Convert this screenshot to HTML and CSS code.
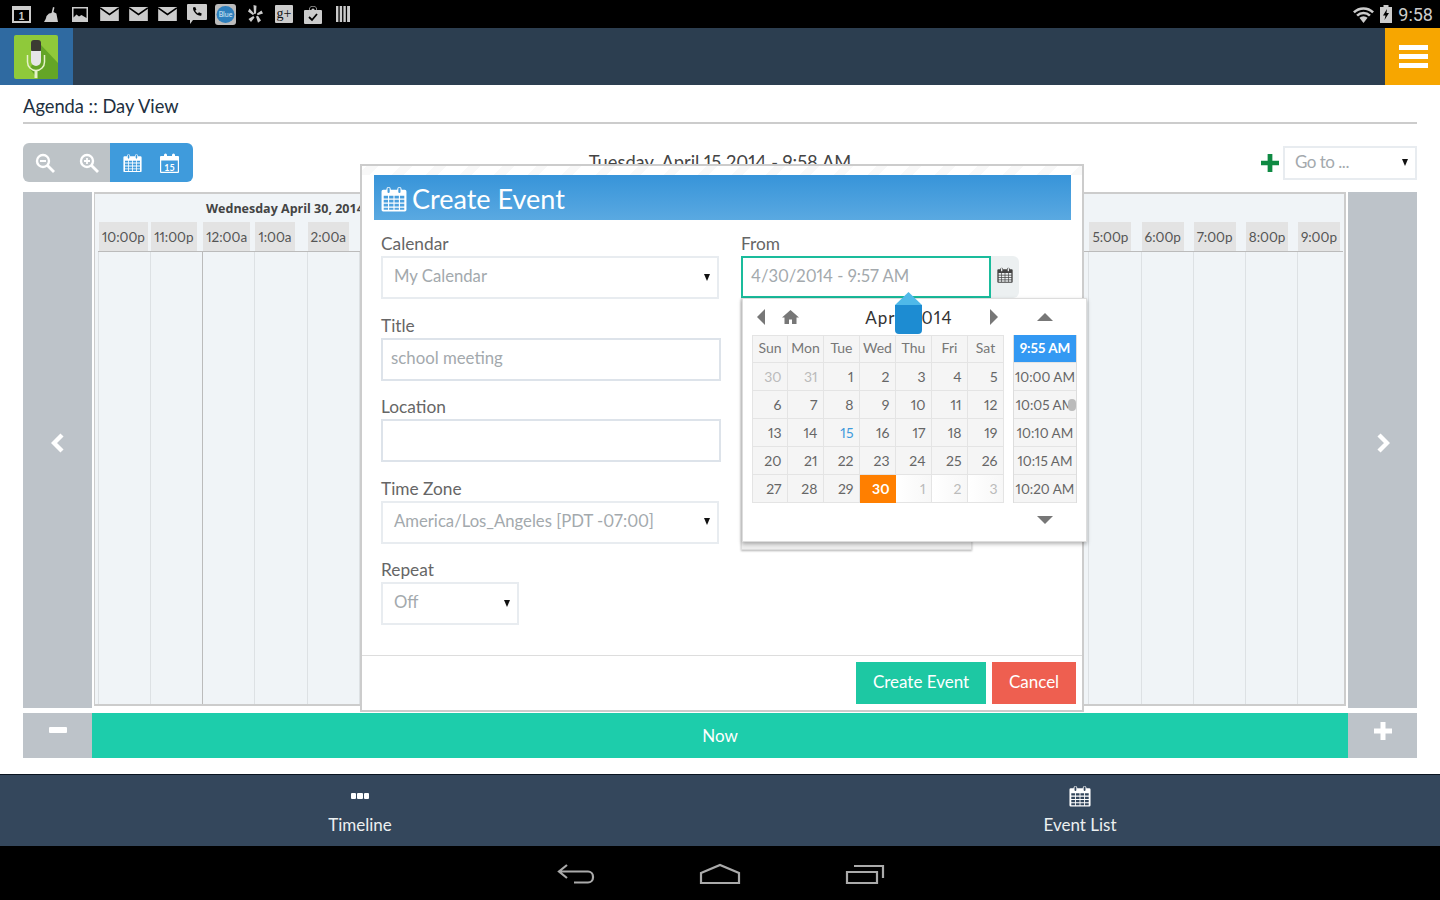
FILE: index.html
```html
<!DOCTYPE html>
<html lang="en">
<head>
<meta charset="utf-8">
<title>Agenda :: Day View</title>
<link rel="stylesheet" href="styles.css">
</head>
<body>
<svg class="defs" width="0" height="0">
  <symbol id="cal" viewBox="0 0 24 24">
    <path fill-rule="evenodd" d="M5 3.5V3a2 2 0 0 1 4 0v.5h6V3a2 2 0 0 1 4 0v.5h3a1.5 1.5 0 0 1 1.500 1.500v17a1.500 1.500 0 0 1-1.500 1.500H2A1.500 1.500 0 0 1 .5 22V5A1.500 1.500 0 0 1 2 3.500zM6 2.500v3a1 1 0 0 0 2 0v-3a1 1 0 0 0-2 0zM16 2.500v3a1 1 0 0 0 2 0v-3a1 1 0 0 0-2 0zM2.500 9h4v2.500h-4zM7.500 9h4v2.500h-4zM12.500 9h4v2.500h-4zM17.500 9h4v2.500h-4zM2.500 12.700h4v2.500h-4zM7.500 12.700h4v2.500h-4zM12.500 12.700h4v2.500h-4zM17.500 12.700h4v2.500h-4zM2.500 16.400h4v2.500h-4zM7.500 16.400h4v2.500h-4zM12.500 16.400h4v2.500h-4zM17.500 16.400h4v2.500h-4zM2.500 20h4v2h-4zM7.500 20h4v2h-4zM12.500 20h4v2h-4zM17.500 20h4v2h-4z"/>
  </symbol>
  <symbol id="mail" viewBox="0 0 20 15">
    <path d="M0 0h20v15H0z"/>
    <path d="M0 1l10 7 10-7" fill="none" stroke="#000" stroke-width="1.600"/>
  </symbol>
</svg>

<div class="status-bar">
  <div class="status-icons">
    <span class="slot"><svg class="st" width="19" height="17" viewBox="0 0 19 17"><path fill-rule="evenodd" d="M0 0h19v17H0zM2 4v11h15V4z"/><text x="9.500" y="14" class="st-num">1</text></svg></span>
    <span class="slot"><svg class="st" width="14" height="15" viewBox="0 0 14 15"><path d="M9 0l1.500.6L9.400 5l3 1.500L14 15H0c1-2 2-3 2.500-6L5 6.500l2.500-.5z"/></svg></span>
    <span class="slot"><svg class="st" width="16" height="15" viewBox="0 0 16 15"><path fill-rule="evenodd" d="M0 0h16v15H0zM1.500 1.500v9l3-3 2.500 2 2.500-1.500 5 3v-9.500z"/></svg></span>
    <span class="slot"><svg class="st" width="19" height="14"><use href="#mail"/></svg></span>
    <span class="slot"><svg class="st" width="19" height="14"><use href="#mail"/></svg></span>
    <span class="slot"><svg class="st" width="19" height="14"><use href="#mail"/></svg></span>
    <span class="slot"><svg class="st" width="20" height="20" viewBox="0 0 20 20"><path d="M1 0h18a1 1 0 0 1 1 1v14a1 1 0 0 1-1 1H6l-3 4v-4H1a1 1 0 0 1-1-1V1a1 1 0 0 1 1-1z"/><path d="M6 3.500l2.200-.5 1.200 2.800-1.300 1a7 7 0 0 0 2.800 2.800l1-1.300 2.800 1.200-.5 2.200c-4 .5-8.500-4-8.200-8.200z" fill="#000"/></svg></span>
    <span class="slot"><svg class="st" width="21" height="21" viewBox="0 0 21 21"><rect width="21" height="21" rx="3" fill="#bbb"/><ellipse cx="10.500" cy="10.500" rx="9" ry="8.500" fill="#2e7fbd"/><text x="10.500" y="13" class="st-blue">Blue</text></svg></span>
    <span class="slot"><svg class="st" width="15" height="19" viewBox="0 0 15 19"><path d="M5.500 0l3 .8-.5 7.700-2 .5zM0 6.500l1.500-3 4.500 5-.8 1.700zM.5 14l4.800-3 1.200 1.500-3.500 4.500zM8 11.500l2-.8 3 4.800-3 2.200zM9 8.500l4.500-3 1.500 3-5.500 1.800z"/></svg></span>
    <span class="slot"><svg class="st" width="18" height="18" viewBox="0 0 18 18"><rect width="18" height="18" rx="1"/><text x="9" y="13" class="st-g">g+</text></svg></span>
    <span class="slot"><svg class="st" width="18" height="19" viewBox="0 0 18 19"><path d="M1 5h4a4 4 0 0 1 8 0h4a1 1 0 0 1 1 1v12a1 1 0 0 1-1 1H1a1 1 0 0 1-1-1V6a1 1 0 0 1 1-1z"/><path d="M6.500 5a2.500 2.500 0 0 1 5 0M5 12l3 3 5-6" fill="none" stroke="#000" stroke-width="1.800"/></svg></span>
    <span class="slot"><svg class="st" width="14" height="16" viewBox="0 0 14 16"><path d="M0 0h2.400v16H0zM3.700 0h2.400v16H3.700zM7.400 0h2.400v16H7.400zM11.100 0H14v16h-2.900z"/></svg></span>
  </div>
  <div class="status-right">
    <svg class="st" width="21" height="17" viewBox="0 0 21 17"><path d="M0 5.500a15 15 0 0 1 21 0l-1.800 1.800a12.500 12.500 0 0 0-17.400 0zM3.200 8.700a10.500 10.500 0 0 1 14.600 0L16 10.500a8 8 0 0 0-11 0zM6.400 11.800a6 6 0 0 1 8.200 0L10.500 17z"/></svg>
    <svg class="st" width="12" height="18" viewBox="0 0 12 18"><path fill-rule="evenodd" d="M3.500 0h5v2H12v16H0V2h3.500zM7 4L3 10.500h2.500L4.500 15 9 8H6.500z"/></svg>
    <span class="clock">9:58</span>
  </div>
</div>

<header class="app-header">
  <div class="logo-tile">
    <svg class="logo" width="44" height="44" viewBox="0 0 44 44">
      <rect width="44" height="44" rx="2" fill="#8fc93a"/>
      <path d="M27 10L44 28v14a2 2 0 0 1-2 2H24l-8-10z" fill="#64a526"/>
      <path d="M13.500 20v7a8.500 8.500 0 0 0 17 0v-7" fill="none" stroke="#e6f2c8" stroke-width="1.500"/>
      <path d="M20.500 35h3v8h-3z" fill="#e6f2c8"/>
      <rect x="17" y="5" width="10" height="12" rx="3" fill="#3b3a33"/>
      <path d="M17 16h10v10a5 5 0 0 1-10 0z" fill="#e6e6e6"/>
    </svg>
  </div>
  <div class="menu-tile"><span class="bar"></span><span class="bar"></span><span class="bar"></span></div>
</header>

<main class="content">
  <h1 class="page-title">Agenda :: Day View</h1>

  <div class="toolbar">
    <div class="view-btns">
      <div class="zoom-group">
        <svg class="tb-icon" width="20" height="20" viewBox="0 0 20 20"><circle cx="8" cy="8" r="6" fill="none" stroke="#fff" stroke-width="2.400"/><path d="M12.500 12.500L19 19" stroke="#fff" stroke-width="2.800"/><path d="M5 8h6" stroke="#fff" stroke-width="2"/></svg>
        <svg class="tb-icon" width="20" height="20" viewBox="0 0 20 20"><circle cx="8" cy="8" r="6" fill="none" stroke="#fff" stroke-width="2.400"/><path d="M12.500 12.500L19 19" stroke="#fff" stroke-width="2.800"/><path d="M5 8h6M8 5v6" stroke="#fff" stroke-width="1.800"/></svg>
      </div>
      <div class="cal-group">
        <svg class="ico-white" width="19" height="20"><use href="#cal"/></svg>
        <svg class="ico-white" width="19" height="20" viewBox="0 0 19 20"><path fill-rule="evenodd" d="M4 3V2a1.500 1.500 0 0 1 3 0v1h5V2a1.500 1.500 0 0 1 3 0v1h3a1 1 0 0 1 1 1v15a1 1 0 0 1-1 1H1a1 1 0 0 1-1-1V4a1 1 0 0 1 1-1zM1.200 7.500v11.300h16.600V7.500z"/><text x="9.500" y="17.500" class="cal-num">15</text></svg>
      </div>
    </div>
    <div class="today">Tuesday, April 15 2014 - 9:58 AM</div>
    <div class="goto-wrap">
      <svg width="18" height="18" viewBox="0 0 19 19"><path d="M7 0h5v7h7v5h-7v7H7v-7H0V7h7z" fill="#0f8a43"/></svg>
      <div class="select goto"><span class="ph">Go to ...</span><i class="caret"></i></div>
    </div>
  </div>

  <section class="timeline">
    <div class="side-btn"><svg width="14" height="20" viewBox="0 0 14 20"><path d="M11 2L3 10l8 8" fill="none" stroke="#fff" stroke-width="4.400"/></svg></div>
    <div class="track">
      <div class="day-row"><span class="day-label">Wednesday April 30, 2014</span></div>
      <div class="hours" id="hours">
        <div class="hour"><span>10:00p</span></div><div class="hour"><span>11:00p</span></div><div class="hour"><span>12:00a</span></div><div class="hour"><span>1:00a</span></div><div class="hour"><span>2:00a</span></div><div class="hour"><span>3:00a</span></div><div class="hour"><span>4:00a</span></div><div class="hour"><span>5:00a</span></div><div class="hour"><span>6:00a</span></div><div class="hour"><span>7:00a</span></div><div class="hour"><span>8:00a</span></div><div class="hour"><span>9:00a</span></div><div class="hour"><span>10:00a</span></div><div class="hour"><span>11:00a</span></div><div class="hour"><span>12:00p</span></div><div class="hour"><span>1:00p</span></div><div class="hour"><span>2:00p</span></div><div class="hour"><span>3:00p</span></div><div class="hour"><span>4:00p</span></div><div class="hour"><span>5:00p</span></div><div class="hour"><span>6:00p</span></div><div class="hour"><span>7:00p</span></div><div class="hour"><span>8:00p</span></div><div class="hour"><span>9:00p</span></div>
      </div>
      <div class="cols">
        <i></i><i></i><i class="day-start"></i><i></i><i></i><i></i><i></i><i></i><i></i><i></i><i></i><i></i><i></i><i></i><i></i><i></i><i></i><i></i><i></i><i></i><i></i><i></i><i></i><i></i>
      </div>
    </div>
    <div class="side-btn"><svg width="14" height="20" viewBox="0 0 14 20"><path d="M3 2l8 8-8 8" fill="none" stroke="#fff" stroke-width="4.400"/></svg></div>
  </section>

  <div class="now-row">
    <div class="now-side"><span class="minus"></span></div>
    <div class="now">Now</div>
    <div class="now-side"><svg width="18" height="18" viewBox="0 0 18 18"><path d="M6.500 0h5v6.500H18v5h-6.500V18h-5v-6.500H0v-5h6.500z" fill="#fff"/></svg></div>
  </div>

  <div class="modal">
    <div class="modal-head">
      <svg class="ico-white" width="26" height="26"><use href="#cal"/></svg>
      <span>Create Event</span>
    </div>
    <div class="modal-body">
      <div class="col-left">
        <div class="field"><label>Calendar</label><div class="select w338"><span class="ph">My Calendar</span><i class="caret"></i></div></div>
        <div class="field"><label>Title</label><div class="input"><span class="ph">school meeting</span></div></div>
        <div class="field"><label>Location</label><div class="input"></div></div>
        <div class="field"><label>Time Zone</label><div class="select w338"><span class="ph">America/Los_Angeles [PDT -07:00]</span><i class="caret"></i></div></div>
        <div class="field"><label>Repeat</label><div class="select w138"><span class="ph">Off</span><i class="caret"></i></div></div>
      </div>
      <div class="col-right">
        <label class="from-label">From</label>
        <div class="from-wrap">
          <div class="from-input"><span class="ph">4/30/2014 - 9:57 AM</span></div>
          <div class="from-addon"><svg class="ico-dark" width="16" height="18"><use href="#cal"/></svg></div>
          <div class="behind"></div>
          <div class="picker">
            <div class="pick-cal">
              <div class="pick-head">
                <i class="tri-left"></i>
                <svg class="home" width="17" height="14" viewBox="0 0 17 14"><path d="M8.500 0L17 7.500h-2.500V14H10V9.500H7V14H2.500V7.500H0z" fill="#777"/></svg>
                <span class="month">April 2014</span>
                <i class="tri-right"></i>
              </div>
              <div class="days">
                <b>Sun</b><b>Mon</b><b>Tue</b><b>Wed</b><b>Thu</b><b>Fri</b><b>Sat</b>
                <span class="old">30</span><span class="old">31</span><span>1</span><span>2</span><span>3</span><span>4</span><span>5</span>
                <span>6</span><span>7</span><span>8</span><span>9</span><span>10</span><span>11</span><span>12</span>
                <span>13</span><span>14</span><span class="today-cell">15</span><span>16</span><span>17</span><span>18</span><span>19</span>
                <span>20</span><span>21</span><span>22</span><span>23</span><span>24</span><span>25</span><span>26</span>
                <span>27</span><span>28</span><span>29</span><span class="sel">30</span><span class="new">1</span><span class="new">2</span><span class="new">3</span>
              </div>
            </div>
            <div class="pick-time">
              <div class="time-nav"><i class="tri-up"></i></div>
              <div class="times">
                <span class="time-sel">9:55 AM</span><span>10:00 AM</span><span>10:05 AM</span><span>10:10 AM</span><span>10:15 AM</span><span>10:20 AM</span>
                <i class="thumb"></i>
              </div>
              <div class="time-nav down"><i class="tri-down"></i></div>
            </div>
            <svg class="drop" width="27" height="42" viewBox="0 0 27 42"><path d="M13.500 0L27 13H0z" fill="#4fb9e9"/><path d="M0 13h27v25a4 4 0 0 1-4 4H4a4 4 0 0 1-4-4z" fill="#1d8cd2"/></svg>
          </div>
        </div>
      </div>
    </div>
    <div class="modal-foot">
      <div class="btn btn-create">Create Event</div>
      <div class="btn btn-cancel">Cancel</div>
    </div>
  </div>
</main>

<nav class="bottom-nav">
  <div class="tab"><div class="tab-ico"><span class="dots"><i></i><i></i><i></i></span></div><span>Timeline</span></div>
  <div class="tab"><div class="tab-ico"><svg class="ico-white" width="22" height="24"><use href="#cal"/></svg></div><span>Event List</span></div>
</nav>

<footer class="sys-nav">
  <svg width="38" height="22" viewBox="0 0 38 22"><path d="M10 2L2 8.500l8 6.500M2 8.500h29a5 5 0 0 1 5 5v1a5 5 0 0 1-5 5H17" fill="none" stroke="#aaa" stroke-width="2.200"/></svg>
  <svg width="42" height="22" viewBox="0 0 42 22"><path d="M2 10L21 2l19 8v10H2z" fill="none" stroke="#aaa" stroke-width="2.200"/></svg>
  <svg width="40" height="22" viewBox="0 0 40 22"><path d="M2 9h30v11H2zM9 3h29v12" fill="none" stroke="#aaa" stroke-width="2.200"/></svg>
</footer>
</body>
</html>
```

FILE: styles.css
```css
* { box-sizing: border-box; }
html, body { margin: 0; padding: 0; }
body {
  width: 1440px;
  height: 900px;
  overflow: hidden;
  display: flex;
  flex-direction: column;
  font-family: "Lato", "Liberation Sans", sans-serif;
  font-variant-numeric: proportional-nums;
  color: #666;
  background: #fff;
}
.defs { position: absolute; }

/* status bar */
.status-bar {
  height: 28px;
  flex: none;
  background: #000;
  display: flex;
  justify-content: space-between;
  align-items: center;
  padding: 0 7px;
}
.status-icons { display: flex; align-items: center; }
.slot { width: 29.200px; display: flex; justify-content: center; }
.st { fill: #ccc; display: block; }
.st-num { font: bold 10px "Liberation Sans", sans-serif; text-anchor: middle; fill: #ccc; }
.st-g { font: 14px "Liberation Serif", serif; text-anchor: middle; fill: #111; }
.st-blue { font: 7px "Lato", sans-serif; text-anchor: middle; fill: #dcecf7; }
.status-right { display: flex; align-items: center; gap: 6px; }
.clock { font: 18px "Roboto", sans-serif; color: #ccc; }

/* header */
.app-header {
  height: 57px;
  flex: none;
  background: #2c3e50;
  display: flex;
  justify-content: space-between;
}
.logo-tile {
  width: 73px;
  background: #2f6aa1;
  padding: 7px 0 0 14px;
}
.logo { display: block; }
.menu-tile {
  width: 55px;
  background: #f7a600;
  display: flex;
  flex-direction: column;
  align-items: center;
  justify-content: center;
  gap: 4px;
  padding-left: 2px;
}
.bar { width: 29px; height: 5px; background: #fff; }

/* content */
.content {
  position: relative;
  height: 689px;
  flex: none;
  padding: 0 23px;
  background: #fff;
}
.page-title {
  margin: 0;
  height: 39px;
  padding-top: 8px;
  border-bottom: 2px solid #ccc;
  font-size: 18.300px;
  line-height: 26px;
  font-weight: 400;
  color: #22303f;
}
.toolbar {
  margin-top: 19px;
  height: 39px;
  display: grid;
  grid-template-columns: 1fr auto 1fr;
}
.view-btns {
  width: 170px;
  height: 39px;
  display: flex;
  border-radius: 6px;
  overflow: hidden;
}
.zoom-group {
  width: 87px;
  background: #bdc3c7;
  display: flex;
  align-items: center;
  padding-left: 12px;
  gap: 24px;
}
.cal-group {
  flex: 1;
  background: #3f9bdc;
  display: flex;
  align-items: center;
  padding-left: 13px;
  gap: 18px;
}
.ico-white { fill: #fff; display: block; }
.ico-dark { fill: #444; display: block; }
.cal-num { font: bold 9px "Lato", sans-serif; text-anchor: middle; fill: #fff; }
.today { font-size: 18.300px; line-height: 22px; padding-top: 8px; color: #444; }
.goto-wrap {
  display: flex;
  justify-content: flex-end;
  align-items: center;
  gap: 4px;
  height: 39px;
}
.select {
  height: 43px;
  border: 2px solid #e8ecf0;
  background: #fff;
  display: flex;
  align-items: center;
  justify-content: space-between;
  padding: 0 7px 3px 11px;
  font-size: 16.700px;
}
.goto { width: 134px; height: 34px; margin-top: 1px; padding-left: 10px; font-size: 17px; letter-spacing: -.5px; }
.ph { color: #a3a9ad; }
.caret {
  width: 0;
  height: 0;
  margin-top: 2px;
  border-left: 3.500px solid transparent;
  border-right: 3.500px solid transparent;
  border-top: 7px solid #111;
}

/* timeline */
.timeline {
  margin-top: 10px;
  height: 516px;
  display: flex;
}
.side-btn {
  width: 69px;
  flex: none;
  background: #bdc3c9;
  display: flex;
  align-items: center;
  justify-content: center;
  padding-bottom: 14px;
}
.track {
  flex: 1;
  margin: 0 2px 2px 2px;
  border: 2px solid #ccc;
  border-left-width: 1px;
  background: #f0f4f7;
  padding: 0 1px 0 3px;
  display: flex;
  flex-direction: column;
  min-width: 0;
}
.day-row { height: 28px; padding-left: 108px; }
.day-label {
  font: 700 12.500px/30px "Open Sans", sans-serif;
  color: #444;
  white-space: nowrap;
}
.hours {
  display: grid;
  grid-template-columns: repeat(24, 52.130px);
  height: 30px;
  border-bottom: 1px solid #bbb;
}
.hour { display: flex; justify-content: flex-start; padding-left: 1px; overflow: hidden; }
.hour span {
  background: #e3e3e3;
  padding: 0 3px;
  height: 29px;
  font-size: 13.500px;
  line-height: 31px;
  color: #555;
  white-space: nowrap;
}
.cols {
  flex: 1;
  display: grid;
  grid-template-columns: repeat(24, 52.130px);
}
.cols i { border-left: 1px solid #dde1e4; }
.cols .day-start { border-left-color: #bbb; }

/* now */
.now-row {
  margin-top: 5px;
  height: 45px;
  display: flex;
}
.now-side {
  width: 69px;
  flex: none;
  background: #bdc3c9;
  display: flex;
  justify-content: center;
  padding-top: 9px;
}
.minus { width: 18px; height: 6px; margin-top: 5px; background: #fff; border-radius: 1px; }
.now {
  flex: 1;
  background: #1dcdab;
  color: #fff;
  text-align: center;
  font-size: 17px;
  line-height: 45px;
}

/* modal */
.modal {
  position: absolute;
  left: 360px;
  top: 79px;
  width: 724px;
  height: 548px;
  border: 2px solid #ccc;
  background: repeating-linear-gradient(-45deg, #f8f8f8 0 8px, #fff 8px 24px) top / 100% 9px no-repeat, #fff;
  display: flex;
  flex-direction: column;
  padding-top: 9px;
}
.modal-head {
  margin: 0 11px 0 12px;
  height: 45px;
  background: linear-gradient(#3794d9, #5aa9e1);
  color: #fff;
  font-size: 27px;
  display: flex;
  align-items: center;
  padding: 2px 0 0 7px;
  gap: 5px;
}
.modal-body {
  flex: 1;
  display: flex;
  padding: 13px 0 0 19px;
  gap: 20px;
}
.col-left { width: 340px; flex: none; }
.field { height: 81.500px; }
.field label, .from-label {
  display: block;
  height: 23px;
  font-size: 17.300px;
  line-height: 21px;
  color: #666;
}
.w338 { width: 338px; }
.w138 { width: 138px; }
.input {
  width: 340px;
  height: 43px;
  border: 2px solid #dde3ea;
  padding: 0 8px;
  font-size: 16.800px;
  line-height: 36px;
  background: #fff;
}
.col-right { flex: 1; }
.from-wrap { position: relative; display: flex; }
.from-input {
  width: 250px;
  height: 42px;
  border: 2px solid #1abc9c;
  padding: 0 8px;
  font-size: 16.600px;
  line-height: 36px;
}
.from-addon {
  width: 28px;
  height: 42px;
  background: #ecf0f1;
  border-radius: 0 6px 6px 0;
  display: flex;
  align-items: center;
  justify-content: center;
  padding-bottom: 4px;
}
.behind {
  position: absolute;
  left: 0;
  top: 42px;
  width: 231px;
  height: 252px;
  border: 1px solid #ddd;
  box-shadow: 0 1px 2px rgba(0,0,0,.3);
  background: #eee;
}
.picker {
  position: absolute;
  left: 1px;
  top: 42px;
  width: 345px;
  height: 244px;
  background: #fff;
  border: 1px solid #ddd;
  box-shadow: 0 2px 4px rgba(0,0,0,.3);
  padding-left: 9px;
  display: flex;
  gap: 9px;
  color: #666;
  font-size: 14px;
}
.pick-cal { width: 252px; flex: none; }
.pick-head {
  position: relative;
  height: 36px;
  display: flex;
  align-items: center;
}
.tri-left, .tri-right, .tri-up, .tri-down { width: 0; height: 0; display: block; }
.tri-left {
  margin-left: 5px;
  border-top: 8px solid transparent;
  border-bottom: 8px solid transparent;
  border-right: 8px solid #777;
}
.tri-right {
  position: absolute;
  right: 6px;
  top: 10px;
  border-top: 8px solid transparent;
  border-bottom: 8px solid transparent;
  border-left: 8px solid #777;
}
.home { margin-left: 17px; }
.month {
  position: absolute;
  left: 0;
  right: -62px;
  text-align: center;
  font-size: 17px;
  letter-spacing: 1px;
  color: #333;
}
.days {
  display: grid;
  grid-template-columns: repeat(7, 36px);
  grid-auto-rows: 28px;
}
.days b, .days span {
  border-right: 1px solid #e4e4e4;
  border-bottom: 1px solid #e4e4e4;
  background: #f5f5f5;
  line-height: 27px;
}
.days b { font-weight: 400; text-align: center; color: #777; border-top: 1px solid #e4e4e4; line-height: 23px; }
.days b:first-child, .days span:nth-child(7n+1) { border-left: 1px solid #e4e4e4; }
.days span { text-align: right; padding-right: 5.500px; }
.days .old { color: #bbb; }
.days .new { color: #bbb; background: linear-gradient(90deg, #fff, #f7f7f7); }
.days .today-cell { color: #3f9bdc; }
.days .sel { background: #ff7f00; color: #fff; font-weight: 700; border-color: #ff7f00; }
.pick-time { width: 64px; flex: none; }
.time-nav { height: 36px; display: flex; align-items: center; justify-content: center; }
.down { height: 34px; }
.tri-up { border-left: 8px solid transparent; border-right: 8px solid transparent; border-bottom: 8px solid #777; }
.tri-down { border-left: 8px solid transparent; border-right: 8px solid transparent; border-top: 8px solid #777; }
.times {
  position: relative;
  display: grid;
  grid-auto-rows: 28px;
  border: 1px solid #ddd;
  border-top: 0;
  border-bottom: 0;
}
.times span {
  text-align: center;
  line-height: 29px;
  background: #f5f5f5;
  border-bottom: 1px solid #e4e4e4;
  white-space: nowrap;
  overflow: hidden;
  font-size: 13.500px;
}
.times .time-sel { background: #3399f3; color: #fff; font-weight: 700; line-height: 27px; }
.thumb {
  position: absolute;
  right: 0;
  top: 64px;
  width: 8px;
  height: 12px;
  border-radius: 4px;
  background: #bbb;
}
.drop { position: absolute; left: 152px; top: -7px; }
.modal-foot {
  height: 55px;
  flex: none;
  border-top: 1px solid #ddd;
  display: flex;
  justify-content: flex-end;
  gap: 6px;
  padding: 6px 6px 0 0;
}
.btn {
  height: 42px;
  color: #fff;
  font-size: 17px;
  line-height: 40px;
  text-align: center;
}
.btn-create { width: 130px; background: #1dc8a3; }
.btn-cancel { width: 84px; background: #ee5f50; }

/* bottom nav */
.bottom-nav {
  height: 72px;
  flex: none;
  background: #34475c;
  border-top: 1px solid #0a1420;
  display: grid;
  grid-template-columns: 1fr 1fr;
  color: #ecf0f1;
  font-size: 17px;
}
.tab { display: flex; flex-direction: column; align-items: center; padding-top: 7px; }
.tab-ico { height: 28px; display: flex; align-items: center; margin-bottom: 4px; }
.dots { display: flex; gap: 1px; }
.dots i { width: 5.500px; height: 5.500px; background: #fff; border-radius: 1px; }

/* system nav */
.sys-nav {
  flex: 1;
  background: #000;
  display: flex;
  justify-content: center;
  align-items: center;
  gap: 104px;
  padding: 2px 0 0 2px;
}
```
